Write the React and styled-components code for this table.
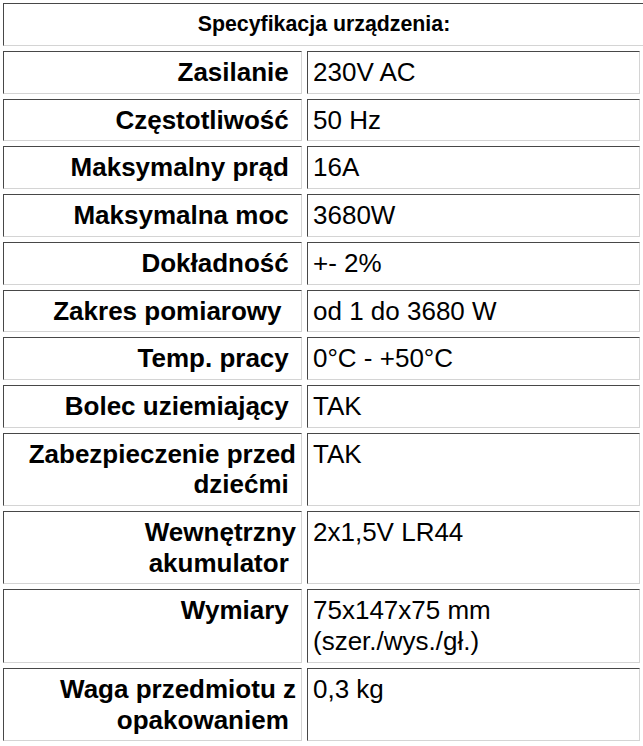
import { Fragment } from "react";
import styled, { createGlobalStyle } from "styled-components";

const GlobalStyle = createGlobalStyle`
  html, body {
    margin: 0;
    padding: 0;
    background: #fff;
    overflow: hidden;
  }
  body {
    font-family: "Liberation Sans", Arial, sans-serif;
    color: #000;
  }
`;

const Page = styled.div`
  padding: 3px 0 0 3px;
`;

const insetBorder = `
  border: 1px solid;
  border-color: #474747 #d4d4d4 #d4d4d4 #474747;
`;

const Header = styled.div`
  ${insetBorder}
  width: 642px;
  box-sizing: border-box;
  padding: 8px 5px;
  line-height: 25px;
  font-size: 16pt;
  font-weight: bold;
  text-align: center;
`;

const Grid = styled.div`
  display: grid;
  grid-template-columns: 299px 333px;
  gap: 5px;
  margin-top: 5px;
`;

const Cell = styled.div`
  ${insetBorder}
  box-sizing: border-box;
  padding: 5px;
  font-size: 26px;
  line-height: 30.7px;
  text-align: ${(p) => (p.$label ? "right" : "left")};
  font-weight: ${(p) => (p.$label ? "bold" : "normal")};
`;

const NB = "\u00a0";

const specs = [
  ["Zasilanie" + NB, "230V AC"],
  ["Częstotliwość" + NB, "50 Hz"],
  ["Maksymalny prąd" + NB, "16A"],
  ["Maksymalna moc" + NB, "3680W"],
  ["Dokładność" + NB, "+- 2%"],
  ["Zakres pomiarowy" + NB + NB, "od 1 do 3680 W"],
  ["Temp. pracy" + NB, "0°C - +50°C"],
  ["Bolec uziemiający" + NB, "TAK"],
  ["Zabezpieczenie przed dziećmi" + NB, "TAK"],
  ["Wewnętrzny akumulator" + NB, "2x1,5V LR44"],
  ["Wymiary" + NB, "75x147x75 mm (szer./wys./gł.)"],
  ["Waga przedmiotu z opakowaniem" + NB, "0,3 kg"],
];

export default function App() {
  return (
    <>
      <GlobalStyle />
      <Page>
        <Header>Specyfikacja urządzenia:</Header>
        <Grid>
          {specs.map(([label, value]) => (
            <Fragment key={label}>
              <Cell $label>{label}</Cell>
              <Cell>{value}</Cell>
            </Fragment>
          ))}
        </Grid>
      </Page>
    </>
  );
}
